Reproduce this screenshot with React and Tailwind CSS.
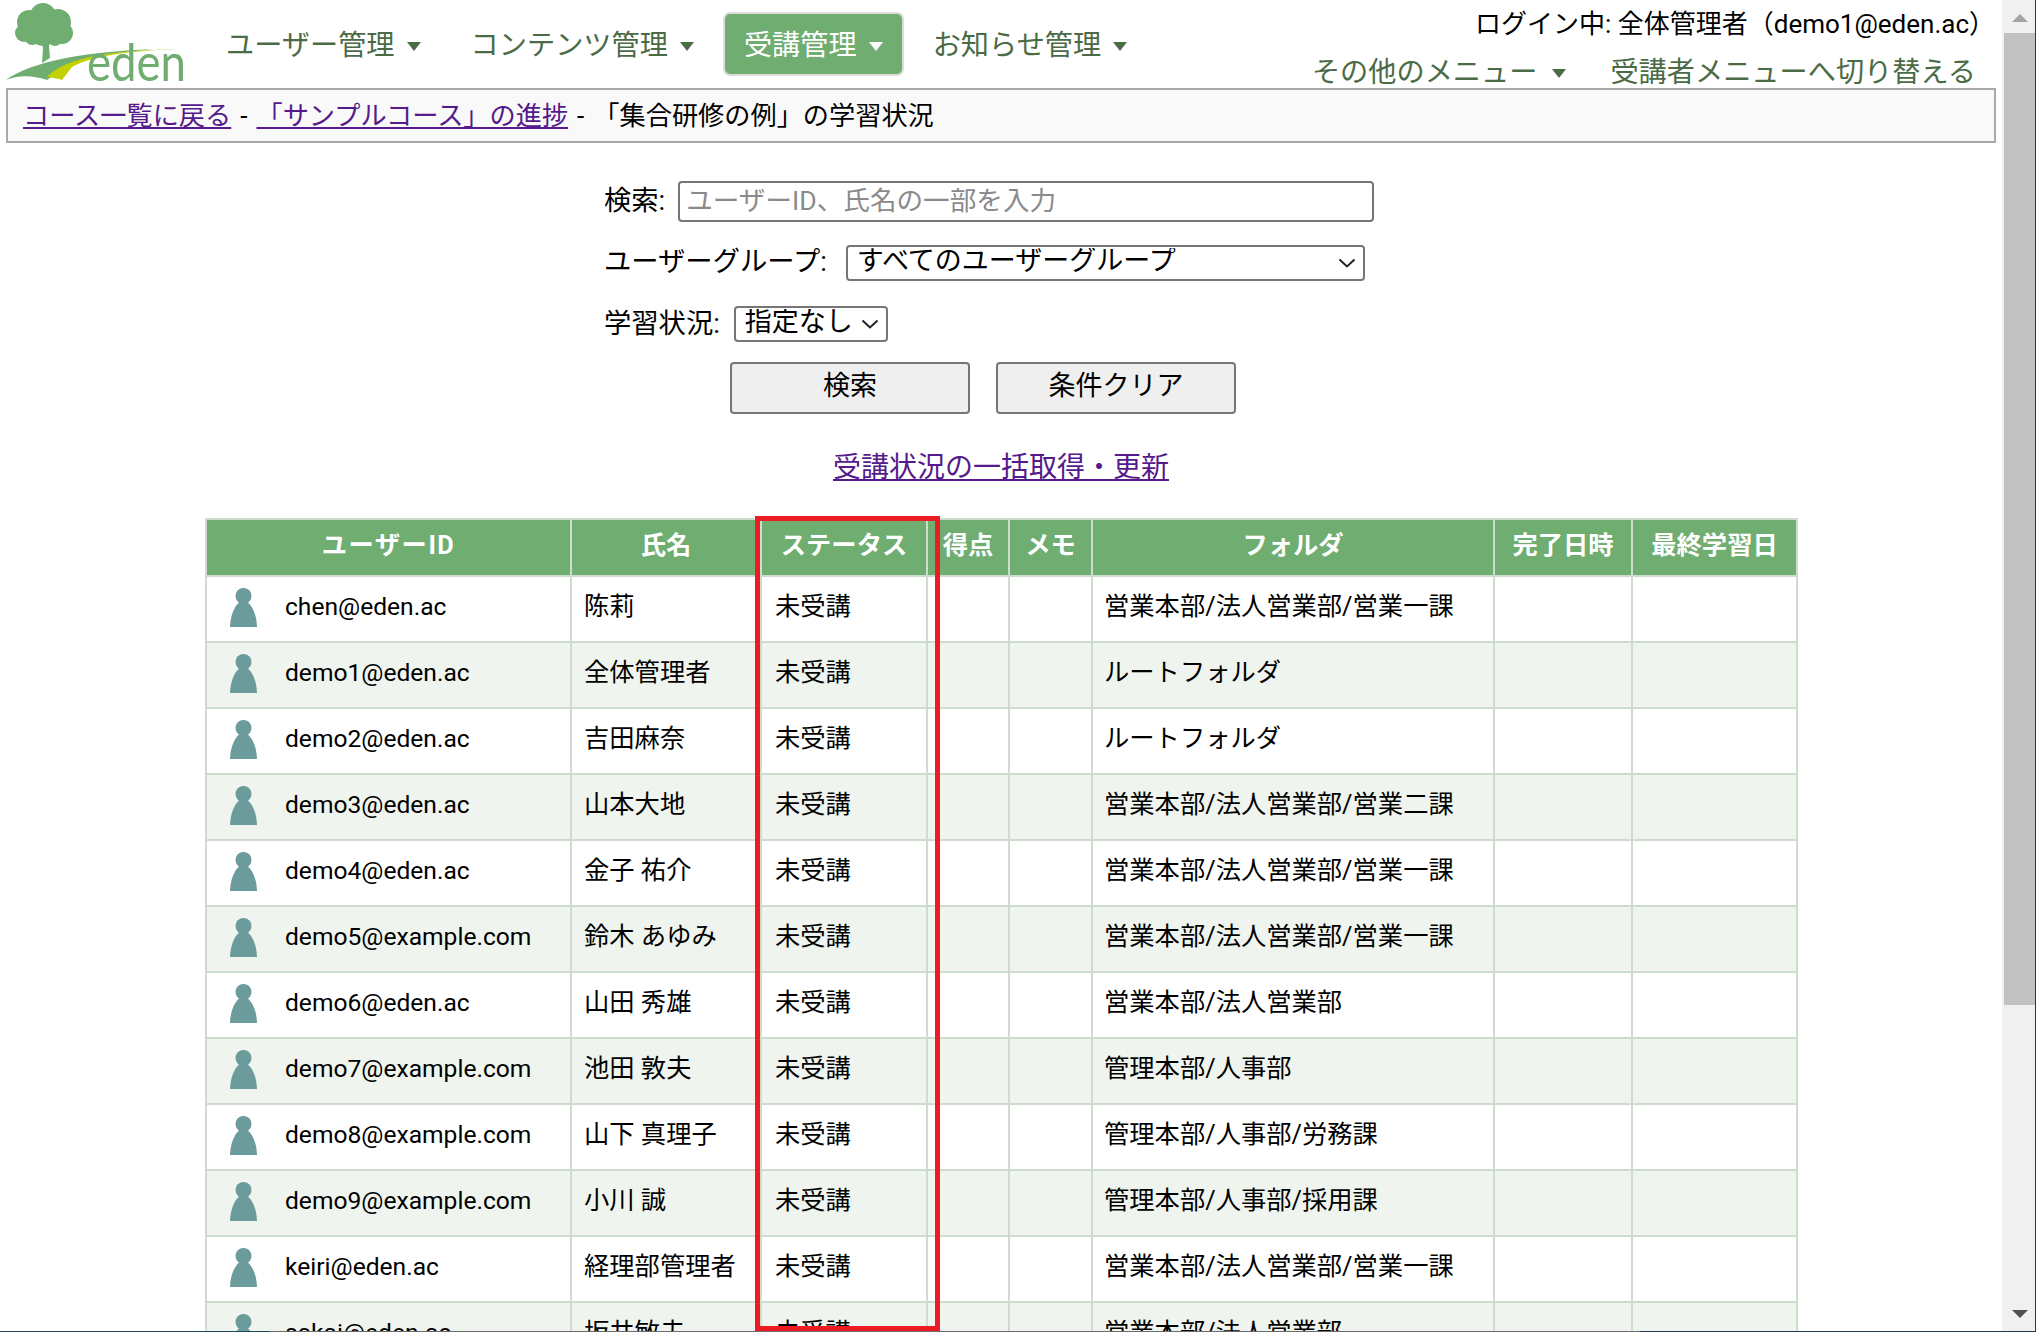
import React from "react";

const rows = [
  ["chen@eden.ac", "陈莉", "営業本部/法人営業部/営業一課"],
  ["demo1@eden.ac", "全体管理者", "ルートフォルダ"],
  ["demo2@eden.ac", "吉田麻奈", "ルートフォルダ"],
  ["demo3@eden.ac", "山本大地", "営業本部/法人営業部/営業二課"],
  ["demo4@eden.ac", "金子 祐介", "営業本部/法人営業部/営業一課"],
  ["demo5@example.com", "鈴木 あゆみ", "営業本部/法人営業部/営業一課"],
  ["demo6@eden.ac", "山田 秀雄", "営業本部/法人営業部"],
  ["demo7@example.com", "池田 敦夫", "管理本部/人事部"],
  ["demo8@example.com", "山下 真理子", "管理本部/人事部/労務課"],
  ["demo9@example.com", "小川 誠", "管理本部/人事部/採用課"],
  ["keiri@eden.ac", "経理部管理者", "営業本部/法人営業部/営業一課"],
  ["sakai@eden.ac", "坂井敏夫", "営業本部/法人営業部"],
];

const Logo = () => (
  <svg viewBox="0 0 190 88" className="w-[190px] h-[88px] shrink-0">
    <g fill="#70ad71">
      <circle cx="43" cy="16" r="13" />
      <circle cx="29" cy="22" r="12" />
      <circle cx="58" cy="22" r="13" />
      <circle cx="24" cy="33" r="9" />
      <circle cx="62" cy="33" r="11" />
      <circle cx="43" cy="31" r="15" />
      <circle cx="32" cy="38" r="7" />
      <circle cx="55" cy="39" r="7" />
      <path d="M41 38 L51 38 L49 46 L50 58 L42 63 L43 48 Z" />
      <path d="M6 80 C30 62 90 48 187 49 C130 48 88 56 64 68 L47 80 C30 74 16 76 6 80 Z" />
    </g>
    <path d="M47 77 C62 62 92 50 187 49 C130 50 92 56 72 67 L62 80 C57 78 52 78 47 77 Z" fill="#c4d100" />
    <text x="87" y="81" fontSize="52" fill="#70ad71" textLength="99" lengthAdjust="spacingAndGlyphs" className="font-['Lato',sans-serif]">eden</text>
  </svg>
);

const Caret = ({ color = "border-t-[#4b6b46]" }) => (
  <span className={`ml-[12px] inline-block w-0 h-0 border-x-[7px] border-x-transparent border-t-[9px] ${color}`} />
);

const NavItem = ({ label, active }) => (
  <div className={`flex items-center h-[64px] px-[19px] pt-[4px] rounded-[7px] border-2 text-[28.2px] ${active ? "bg-[#70ad71] border-[#dddddd] text-white" : "border-transparent text-[#4b6b46]"}`}>
    {label}
    <Caret color={active ? "border-t-white" : "border-t-[#4b6b46]"} />
  </div>
);

const UserIcon = () => (
  <svg viewBox="0 0 27 39" className="w-[27px] h-[39px] shrink-0">
    <circle cx="13.5" cy="8" r="8" fill="#6b9b9b" />
    <path d="M0 39 C0.5 27 4 19 9.5 14 L17.5 14 C23 19 26.5 27 27 39 Z" fill="#6b9b9b" />
  </svg>
);

const Chevron = () => (
  <svg viewBox="0 0 18 10" className="absolute right-[9px] top-[13px] w-[18px] h-[10px] pointer-events-none">
    <path d="M1.5 1.5 L9 8.5 L16.5 1.5" fill="none" stroke="#222222" strokeWidth="2" />
  </svg>
);

const headers = ["ユーザーID", "氏名", "ステータス", "得点", "メモ", "フォルダ", "完了日時", "最終学習日"];

const App = () => {
  return (
    <div className="relative flex w-[2036px] h-[1332px] overflow-hidden bg-white text-black text-[25.3px] font-['Roboto','Noto_Sans_CJK_JP',sans-serif]">
      <div className="relative w-[2002px] shrink-0 overflow-hidden">
        <header className="relative flex h-[88px]">
          <Logo />
          <nav className="flex gap-[8px] ml-[15px] mt-[12px] h-[64px]">
            <NavItem label="ユーザー管理" />
            <NavItem label="コンテンツ管理" />
            <NavItem label="受講管理" active />
            <NavItem label="お知らせ管理" />
          </nav>
          <div className="ml-auto mr-[7px] flex flex-col items-end">
            <div className="mt-[6px] h-[36px] leading-[36px] text-[26px]">ログイン中: 全体管理者（demo1@eden.ac）</div>
            <div className="mt-[13px] flex items-center h-[36px] text-[28.2px] text-[#4b6b46] mr-[19px]">
              <span className="mr-[3px]">その他のメニュー</span>
              <Caret />
              <span className="ml-[44px]">受講者メニューへ切り替える</span>
            </div>
          </div>
        </header>

        <div className="ml-[6px] w-[1990px] h-[55px] flex items-center pl-[15px] pt-[2px] border-2 border-[#a9a9a9] bg-[#f9f9f9] text-[26.2px]">
          <a href="#" className="underline text-[#551a8b]">コース一覧に戻る</a>
          <span className="mx-[9px]">-</span>
          <a href="#" className="underline text-[#551a8b]">「サンプルコース」の進捗</a>
          <span className="mx-[9px]">-</span>
          <span>「集合研修の例」の学習状況</span>
        </div>

        <div className="ml-[604px] mt-[38px] w-[800px] text-[27.3px]">
          <div className="flex items-center h-[41px]">
            <span className="mr-[13px]">検索:</span>
            <input
              placeholder="ユーザーID、氏名の一部を入力"
              className="w-[696px] h-[41px] px-[6px] pb-[2px] border-2 border-[#767676] rounded-[4px] text-[26.6px] placeholder:text-[#8a8a8a]"
            />
          </div>
          <div className="flex items-center h-[36px] mt-[23px]">
            <span className="mr-[19px] pb-[1px]">ユーザーグループ:</span>
            <div className="relative">
              <select className="block appearance-none w-[519px] h-[36px] pl-[9px] pb-[4px] leading-[26px] border-2 border-[#767676] rounded-[4px] text-[27px] bg-white">
                <option>すべてのユーザーグループ</option>
              </select>
              <Chevron />
            </div>
          </div>
          <div className="flex items-center h-[36px] mt-[25px]">
            <span className="mr-[14px]">学習状況:</span>
            <div className="relative">
              <select className="block appearance-none w-[154px] h-[36px] pl-[9px] pb-[4px] leading-[26px] border-2 border-[#767676] rounded-[4px] text-[27px] bg-white">
                <option>指定なし</option>
              </select>
              <Chevron />
            </div>
          </div>
        </div>

        <div className="flex gap-[26px] ml-[730px] mt-[20px] text-[27px]">
          <button className="w-[240px] h-[52px] bg-[#efefef] border-2 border-[#767676] rounded-[4px] pb-[3px]">検索</button>
          <button className="w-[240px] h-[52px] bg-[#efefef] border-2 border-[#767676] rounded-[4px] pb-[3px]">条件クリア</button>
        </div>

        <div className="flex justify-center w-[2002px] mt-[35px]">
          <a href="#" className="underline text-[#551a8b] h-[38px] leading-[38px] text-[28px]">受講状況の一括取得・更新</a>
        </div>

        <table className="ml-[205px] mt-[31px] w-[1591px] table-fixed border-collapse border-2 border-[#cddccd]">
          <colgroup>
            <col className="w-[365px]" />
            <col className="w-[190px]" />
            <col className="w-[166px]" />
            <col className="w-[82px]" />
            <col className="w-[83px]" />
            <col className="w-[402px]" />
            <col className="w-[138px]" />
            <col className="w-[165px]" />
          </colgroup>
          <thead>
            <tr className="h-[57px] bg-[#70ad71] text-white">
              {headers.map((h, i) => (
                <th key={h} className={`border-2 border-[#cddccd] font-bold p-0 pb-[4px] whitespace-nowrap ${i === 0 ? "tracking-[1.5px]" : ""}`}>{h}</th>
              ))}
            </tr>
          </thead>
          <tbody>
            {rows.map((r, i) => (
              <tr key={r[0]} className={`h-[66px] ${i % 2 === 1 ? "bg-[#eff4ee]" : "bg-white"}`}>
                <td className="border-2 border-[#cddccd] pl-[23px] pb-[4px]">
                  <div className="flex items-center gap-[28px]">
                    <UserIcon />
                    <span className="text-[24.6px]">{r[0]}</span>
                  </div>
                </td>
                <td className="border-2 border-[#cddccd] pl-[12px] pb-[4px]">{r[1]}</td>
                <td className="border-2 border-[#cddccd] pl-[13px] pb-[4px]">未受講</td>
                <td className="border-2 border-[#cddccd]"></td>
                <td className="border-2 border-[#cddccd]"></td>
                <td className="border-2 border-[#cddccd] pl-[11px] pb-[4px]">{r[2]}</td>
                <td className="border-2 border-[#cddccd]"></td>
                <td className="border-2 border-[#cddccd]"></td>
              </tr>
            ))}
          </tbody>
        </table>

        {/* red highlight over the status column */}
        <div className="absolute left-[755px] top-[516px] w-[185px] h-[815px] border-[5px] border-[#ed1c24]" />
      </div>

      <aside className="flex flex-col items-center w-[34px] h-[1332px] pl-[2px] bg-[#f0f0f0] border-r border-[#1f3a54]">
        <div className="h-[33px] pt-[14px]">
          <span className="block w-0 h-0 border-x-[8px] border-x-transparent border-b-[8px] border-b-[#a3a3a3]" />
        </div>
        <div className="w-full h-[972px] bg-[#c1c1c1]" />
        <div className="mt-auto h-[36px] pt-[14px]">
          <span className="block w-0 h-0 border-x-[8px] border-x-transparent border-t-[8px] border-t-[#505050]" />
        </div>
      </aside>

      {/* window edge along the bottom */}
      <div className="absolute left-0 right-0 bottom-0 flex h-[1px]">
        <div className="w-[270px] bg-[#1f4a5a]" />
        <div className="flex-1 bg-[#6b6b6b]" />
        <div className="w-[396px] bg-[#1f3a54]" />
      </div>
    </div>
  );
};

export default App;
